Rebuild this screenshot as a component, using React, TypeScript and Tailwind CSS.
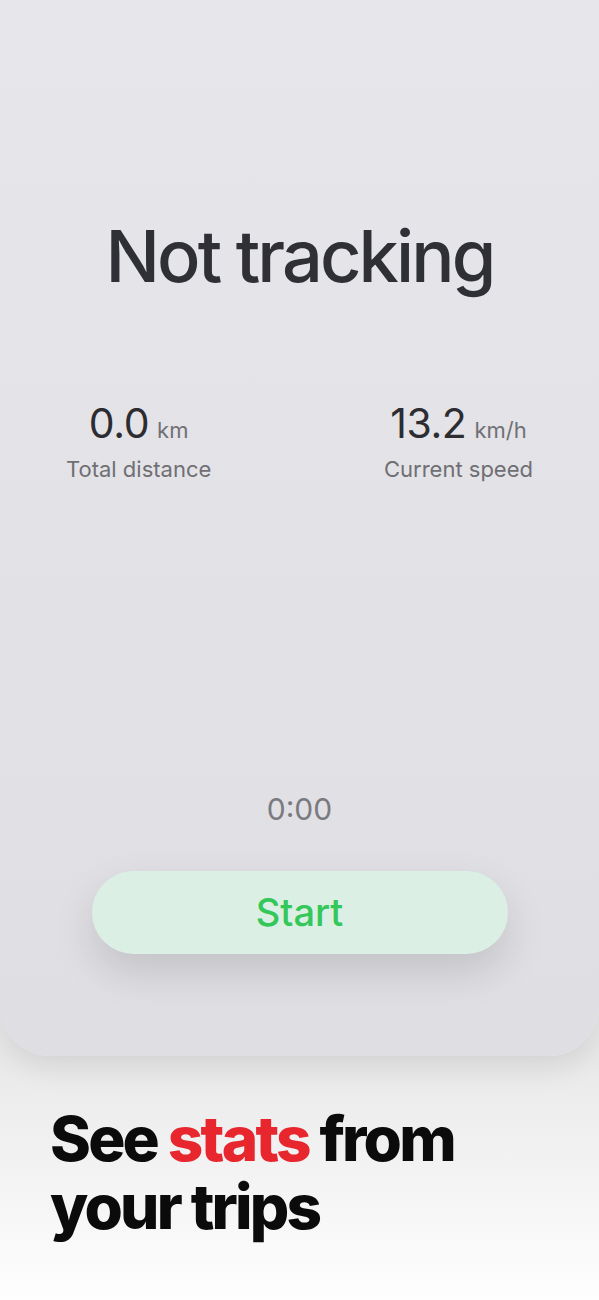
const sans = "font-['Inter','Noto_Sans',sans-serif]";

function Stat({ value, unit, label }: { value: string; unit: string; label: string }) {
  return (
    <div className="flex flex-col items-center">
      <div className="flex items-baseline gap-2">
        <span className="text-[41px] leading-none tracking-[-0.01em] text-[#2c2c31]">{value}</span>
        <span className="text-[22px] leading-none text-[#707075]">{unit}</span>
      </div>
      <span className="mt-[14px] text-[22px] leading-none text-[#6f6f74]">{label}</span>
    </div>
  );
}

export default function App() {
  return (
    <div className={`${sans} flex h-[1300px] w-[599px] flex-col overflow-hidden bg-[#e9e9ea]`}>
      {/* tracker card */}
      <div className="relative z-10 flex h-[1056px] shrink-0 flex-col items-center rounded-b-[50px] bg-gradient-to-b from-[#e7e6eb] to-[#dfdee3] shadow-[0_10px_30px_rgba(0,0,0,0.10)]">
        <h1 className="mt-[220px] text-[72px] font-medium leading-none tracking-[-0.04em] text-[#2f2f36]">
          Not tracking
        </h1>

        <div className="mt-[111px] flex w-full justify-between px-[66px]">
          <Stat value="0.0" unit="km" label="Total distance" />
          <Stat value="13.2" unit="km/h" label="Current speed" />
        </div>

        <div className="mt-auto mb-[102px] flex flex-col items-center">
          <span className="text-[30px] leading-none text-[#7a7a7f]">0:00</span>
          <button className="mt-[47px] flex h-[83px] w-[416px] items-center justify-center rounded-full bg-[#dcefe4] text-[38px] font-medium text-[#34c759] shadow-[0_18px_40px_rgba(0,0,0,0.13)]">
            Start
          </button>
        </div>
      </div>

      {/* caption */}
      <div className="flex-1 bg-gradient-to-b from-[#e9e9ea] to-[#fefefe]">
        <h2 className="ml-[50px] mt-[49px] text-[62px] font-extrabold leading-[68px] tracking-[-0.045em] text-[#0b0b0b]">
          See <span className="text-[#e8262e]">stats</span> from
          <br />
          your trips
        </h2>
      </div>
    </div>
  );
}
